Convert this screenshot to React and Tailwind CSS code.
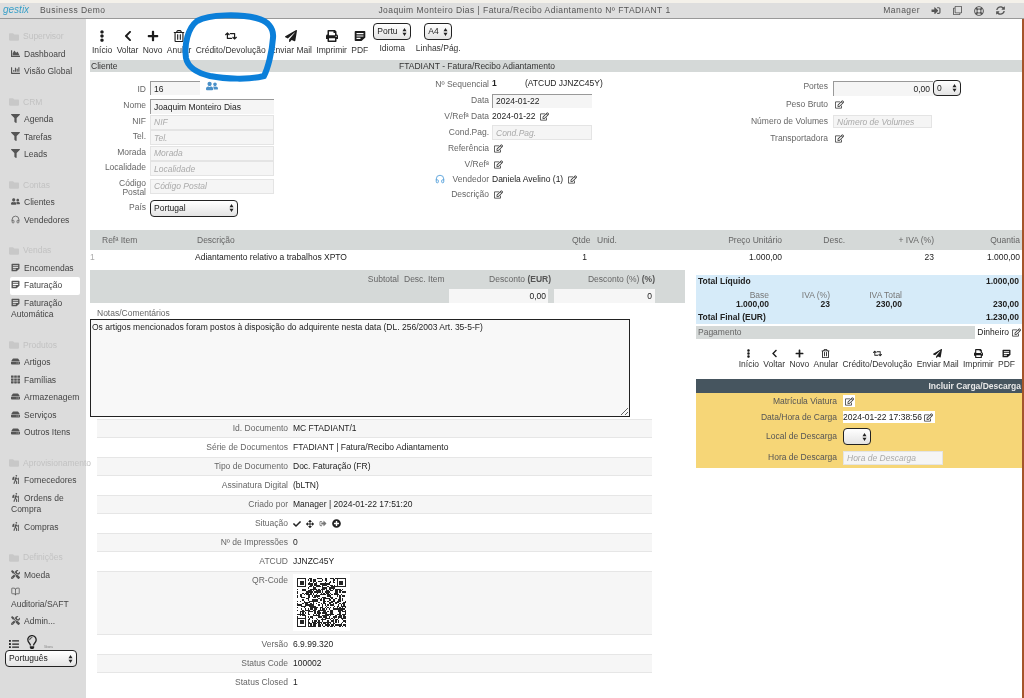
import {
  FaEllipsisV, FaChevronLeft, FaPlus, FaRegTrashAlt, FaRetweet, FaPaperPlane, FaPrint,
  FaFolder, FaChartBar, FaFilter, FaUserFriends, FaRegEdit, FaHdd, FaTh, FaHiking, FaTools,
  FaSignInAlt, FaRegClone, FaRegLifeRing, FaCheck, FaArrowsAlt, FaSignOutAlt, FaPlusCircle,
  FaList, FaRegLightbulb, FaChartArea, FaSyncAlt,
} from 'react-icons/fa'
import { BookOpen, Headphones } from 'lucide-react'

// the note glyph used for PDF and the Vendas entries: rounded sheet with a clipped corner
function NoteIcon({ className }) {
  return (
    <svg viewBox="0 0 12 12" className={className} fill="currentColor">
      <path d="M1.5 1h9a.8.8 0 0 1 .8.8V7.5L7.5 11H1.5a.8.8 0 0 1-.8-.8V1.8a.8.8 0 0 1 .8-.8zM2.5 3v1.2h7V3zm0 2.4v1.2h7V5.4zm0 2.4V9h4V7.8z" fillRule="evenodd" />
    </svg>
  )
}

const NAV = [
  { title: 'Supervisor', items: [['Dashboard', FaChartArea], ['Visão Global', FaChartBar]] },
  { title: 'CRM', items: [['Agenda', FaFilter], ['Tarefas', FaFilter], ['Leads', FaFilter]] },
  { title: 'Contas', items: [['Clientes', FaUserFriends], ['Vendedores', Headphones]] },
  { title: 'Vendas', items: [['Encomendas', NoteIcon], ['Faturação', NoteIcon, true], ['Faturação Automática', NoteIcon]] },
  { title: 'Produtos', items: [['Artigos', FaHdd], ['Famílias', FaTh], ['Armazenagem', FaHdd], ['Serviços', FaHdd], ['Outros Itens', FaHdd]] },
  { title: 'Aprovisionamento', items: [['Fornecedores', FaHiking], ['Ordens de Compra', FaHiking], ['Compras', FaHiking]] },
  { title: 'Definições', items: [['Moeda', FaTools], ['Auditoria/SAFT', BookOpen], ['Admin...', FaTools]] },
]

const TOOLS = [
  ['Início', FaEllipsisV], ['Voltar', FaChevronLeft], ['Novo', FaPlus], ['Anular', FaRegTrashAlt],
  ['Crédito/Devolução', FaRetweet], ['Enviar Mail', FaPaperPlane], ['Imprimir', FaPrint], ['PDF', NoteIcon],
]

const INFO = [
  ['Id. Documento', 'MC FTADIANT/1'],
  ['Série de Documentos', 'FTADIANT | Fatura/Recibo Adiantamento'],
  ['Tipo de Documento', 'Doc. Faturação (FR)'],
  ['Assinatura Digital', '(bLTN)'],
  ['Criado por', 'Manager | 2024-01-22 17:51:20'],
  ['Situação', 'icons'],
  ['Nº de Impressões', '0'],
  ['ATCUD', 'JJNZC45Y'],
  ['QR-Code', 'qr'],
  ['Versão', '6.9.99.320'],
  ['Status Code', '100002'],
  ['Status Closed', '1'],
]

// fake but stable QR pattern, 37 modules wide
function qrPath() {
  let seed = 1337
  let d = ''
  const finder = (x, y) => x < 7 && y < 7 && (x === 0 || y === 0 || x === 6 || y === 6 || (x > 1 && x < 5 && y > 1 && y < 5))
  for (let y = 0; y < 37; y++) {
    for (let x = 0; x < 37; x++) {
      seed = (seed * 16807) % 2147483647
      let on = seed % 100 < 52
      const inTL = x < 8 && y < 8
      const inTR = x > 28 && y < 8
      const inBL = x < 8 && y > 28
      if (inTL) on = finder(x, y)
      if (inTR) on = finder(x - 30, y)
      if (inBL) on = finder(x, y - 30)
      if (on) d += `M${x} ${y}h1v1h-1z`
    }
  }
  return d
}

function Select({ value, className }) {
  return (
    <span className={`relative block shrink-0 ${className}`}>
      <select
        defaultValue={value}
        className="block h-full w-full appearance-none rounded-[4px] border-[1.5px] border-[#222] bg-gradient-to-b from-white to-[#e4e4e4] pl-[3px] text-[8.5px] text-[#222]"
      >
        <option>{value}</option>
      </select>
      <svg viewBox="0 0 6 10" className="pointer-events-none absolute right-[4px] top-1/2 h-[8px] w-[5px] -translate-y-1/2 fill-[#222]">
        <path d="M3 0l2.5 4h-5zM3 10L.5 6h5z" />
      </svg>
    </span>
  )
}

function Input({ value, placeholder, className = '' }) {
  return (
    <input
      readOnly
      value={value}
      placeholder={placeholder}
      className={`block bg-[#f5f5f5] px-[3px] text-[8.5px] text-[#222] outline-none placeholder:italic placeholder:text-[#aaa] ${value ? 'border-t border-l border-[#999]' : 'border border-[#e4e4e4]'} ${className}`}
    />
  )
}

function Edit() {
  return (
    <span className="inline-flex h-[12px] w-[12px] shrink-0 items-center justify-center bg-white">
      <FaRegEdit className="h-[9px] w-[9px] text-[#333]" />
    </span>
  )
}

function Toolbar({ className, small }) {
  return (
    <div className={`flex items-end gap-[4.3px] ${className}`}>
      {TOOLS.map(([label, Icon]) => (
        <div key={label} className="flex flex-col items-center">
          <Icon className={small ? 'mb-[1px] h-[9px] w-[9px] text-[#1c1c1c]' : 'mb-[3px] h-[12px] w-[12px] text-[#1c1c1c]'} />
          <span className="whitespace-nowrap text-[8.5px] leading-[11px] text-[#333]">{label}</span>
        </div>
      ))}
    </div>
  )
}

function Sidebar() {
  return (
    <aside className="w-[86px] shrink-0 bg-[#dcdcdc] pt-[8.5px]">
      {NAV.map((group) => (
        <div key={group.title} className="mb-[12.5px]">
          <div className="flex h-[18px] items-center gap-[4px] whitespace-nowrap pl-[9px] text-[8.5px] text-[#c2c2c2]">
            <FaFolder className="h-[10px] w-[10px] shrink-0 text-[#c8c8c8]" />
            {group.title}
          </div>
          {group.items.map(([label, Icon, active]) => (
            <div
              key={label}
              className={`ml-[10px] mr-[6px] rounded-[2px] pl-[1px] text-[8.5px] leading-[11.5px] text-[#444] py-[3px] ${active ? 'bg-white' : ''}`}
            >
              <Icon className="mr-[4px] inline-block h-[9px] w-[9px] align-[-1px] text-[#555]" />
              {label}
            </div>
          ))}
        </div>
      ))}
      <div className="-mt-[8px] flex items-end gap-[6px] pl-[8px]">
        <FaList className="h-[10px] w-[12px] text-[#222]" />
        <FaRegLightbulb className="h-[14px] w-[12px] text-[#222]" />
        <span className="text-[3px] text-[#888]">Sbarra</span>
      </div>
      <Select value="Português" className="ml-[5px] mt-[1px] h-[17px] w-[72px]" />
    </aside>
  )
}

function FormLeft() {
  const Row = ({ label, children, className = 'h-[15.5px]', labelClass = '-translate-y-[1px]' }) => (
    <div className={`flex items-center gap-[4px] ${className}`}>
      <span className={`w-[56px] text-right text-[8.5px] leading-[9px] text-[#666] ${labelClass}`}>{label}</span>
      {children}
    </div>
  )
  return (
    <div className="w-[184px] shrink-0 pt-[8.5px]">
      <Row label="ID" className="mb-[3.5px] h-[15px]" labelClass="translate-y-[1px]">
        <Input value="16" className="h-[14px] w-[50px]" />
        <FaUserFriends className="ml-[2px] h-[10px] w-[12px] -translate-y-[2px] text-[#4a90c8]" />
      </Row>
      <Row label="Nome"><Input value="Joaquim Monteiro Dias" className="h-[15px] w-[124px]" /></Row>
      <Row label="NIF"><Input placeholder="NIF" className="h-[15px] w-[124px]" /></Row>
      <Row label="Tel."><Input placeholder="Tel." className="h-[15px] w-[124px]" /></Row>
      <Row label="Morada"><Input placeholder="Morada" className="h-[15px] w-[124px]" /></Row>
      <Row label="Localidade"><Input placeholder="Localidade" className="h-[15px] w-[124px]" /></Row>
      <Row label={<>Código<br />Postal</>} className="mb-[4px] h-[19px]" labelClass="translate-y-[2px]">
        <Input placeholder="Código Postal" className="h-[15px] w-[124px]" />
      </Row>
      <Row label="País" className="h-[17px]"><Select value="Portugal" className="h-[17px] w-[88px]" /></Row>
    </div>
  )
}

function FormMiddle() {
  const Row = ({ label, children, className = 'h-[16px]', icon }) => (
    <div className={`flex items-center gap-[3px] ${className}`}>
      <span className="relative w-[215px] text-right text-[8.5px] text-[#666]">
        {icon}
        {label}
      </span>
      {children}
    </div>
  )
  const Val = ({ children }) => <span className="text-[8.5px] text-[#222]">{children}</span>
  return (
    <div className="w-[366px] shrink-0 pt-[4.5px]">
      <Row label="Nº Sequencial">
        <span className="w-[30px] -translate-y-[1px] text-[8.5px] font-bold text-[#222]">1</span>
        <span className="-translate-y-[1px] text-[8.5px] text-[#222]">(ATCUD JJNZC45Y)</span>
      </Row>
      <Row label="Data"><Input value="2024-01-22" className="h-[14px] w-[100px]" /></Row>
      <Row label="V/Refª Data"><Val>2024-01-22</Val><Edit /></Row>
      <Row label="Cond.Pag."><Input placeholder="Cond.Pag." className="h-[15px] w-[100px]" /></Row>
      <Row label="Referência"><Edit /></Row>
      <Row label="V/Refª" className="h-[15px]"><Edit /></Row>
      <Row
        label="Vendedor"
        className="h-[15px]"
        icon={<Headphones className="absolute left-[161px] top-[1px] h-[10px] w-[10px] text-[#4a9ad8]" />}
      >
        <Val>Daniela Avelino (1)</Val><Edit />
      </Row>
      <Row label="Descrição"><Edit /></Row>
    </div>
  )
}

function FormRight() {
  const Row = ({ label, children, className = 'h-[16px]', labelClass = '' }) => (
    <div className={`flex items-center gap-[5px] ${className}`}>
      <span className={`w-[188px] text-right text-[8.5px] text-[#666] ${labelClass}`}>{label}</span>
      {children}
    </div>
  )
  return (
    <div className="flex-1 pt-[8px]">
      <Row label="Portes" labelClass="-translate-y-[2px]">
        <Input value="0,00" className="h-[15px] w-[100px] text-right" />
        <Select value="0" className="-ml-[5px] h-[16px] w-[28px]" />
      </Row>
      <Row label="Peso Bruto" className="h-[17px]"><Edit /></Row>
      <Row label="Número de Volumes" className="h-[17px]"><Input placeholder="Número de Volumes" className="h-[13px] w-[99px]" /></Row>
      <Row label="Transportadora"><Edit /></Row>
    </div>
  )
}

function LineTable() {
  const cols = 'grid grid-cols-[105px_375px_25px_45px_142px_63px_89px_86px] text-[8.5px]'
  return (
    <div>
      <div className={`${cols} h-[20px] items-center bg-[#d5d9d8] text-[#666]`}>
        <span className="pl-[12px]">Refª Item</span>
        <span className="pl-[2px]">Descrição</span>
        <span className="pl-[2px]">Qtde</span>
        <span className="pl-[2px]">Unid.</span>
        <span className="text-right">Preço Unitário</span>
        <span className="text-right">Desc.</span>
        <span className="text-right">+ IVA (%)</span>
        <span className="text-right">Quantia</span>
      </div>
      <div className={`${cols} h-[15px] items-center text-[#222]`}>
        <span className="text-[#aaa]">1</span>
        <span>Adiantamento relativo a trabalhos XPTO</span>
        <span className="pr-[8px] text-right">1</span>
        <span />
        <span className="text-right">1.000,00</span>
        <span />
        <span className="text-right">23</span>
        <span className="text-right">1.000,00</span>
      </div>
    </div>
  )
}

function Info() {
  const qr = qrPath()
  return (
    <div className="ml-[7px] mt-[2px] w-[555px]">
      {INFO.map(([label, value], i) => (
        <div
          key={label}
          className={`flex gap-[5px] text-[8.5px] ${i % 2 === 0 ? 'border-y border-[#e6e6e6] bg-[#f6f6f6]' : ''} ${value === 'qr' ? 'h-[64px] items-start' : 'h-[19px] items-center'}`}
        >
          <span className={`w-[191px] text-right text-[#666] ${value === 'qr' ? 'pt-[2px]' : ''}`}>{label}</span>
          {value === 'icons' && (
            <span className="flex items-center gap-[5px] text-[#222]">
              <FaCheck className="h-[8px] w-[8px]" />
              <FaArrowsAlt className="h-[8px] w-[8px]" />
              <FaSignOutAlt className="h-[7px] w-[8px] text-[#777]" />
              <FaPlusCircle className="h-[9px] w-[9px]" />
            </span>
          )}
          {value === 'qr' && (
            <span className="mt-[2px] block h-[57px] w-[57px] bg-white p-[4px]">
              <svg viewBox="0 0 37 37" className="h-[49px] w-[49px]" shapeRendering="crispEdges">
                <path d={qr} fill="#222" />
              </svg>
            </span>
          )}
          {value !== 'icons' && value !== 'qr' && <span className="text-[#222]">{value}</span>}
        </div>
      ))}
    </div>
  )
}

function Totals() {
  return (
    <div className="w-[326px] shrink-0 pt-[5px]">
      <div className="h-[49px] bg-[#d6ebf9] px-[2px] text-[8.5px] leading-[10px] text-[#222]">
        <div className="flex justify-between pr-[1px] pt-[1px] font-bold">
          <span>Total Líquido</span>
          <span>1.000,00</span>
        </div>
        <div className="mt-[5px] grid grid-cols-[71px_61px_72px_1fr] pr-[1px] text-right leading-[8.5px]">
          <span className="text-[#777]">Base</span>
          <span className="text-[#777]">IVA (%)</span>
          <span className="text-[#777]">IVA Total</span>
          <span />
          <span className="font-bold">1.000,00</span>
          <span className="font-bold">23</span>
          <span className="font-bold">230,00</span>
          <span className="font-bold">230,00</span>
        </div>
        <div className="mt-[4px] flex justify-between pr-[1px] font-bold">
          <span>Total Final (EUR)</span>
          <span>1.230,00</span>
        </div>
      </div>
      <div className="mt-[2px] flex h-[13px] items-center bg-[#d5d9d8] pl-[2px] text-[8.5px] text-[#666]">
        <span className="flex-1">Pagamento</span>
        <span className="flex h-full items-center gap-[1px] bg-white pl-[2px] text-[#222]">Dinheiro <Edit /></span>
      </div>
      <Toolbar small className="mt-[10px] justify-end pr-[7px]" />
      <div className="mt-[9px] h-[14px] bg-[#46555f] pr-[1px] text-right text-[8.5px] font-bold leading-[14px] text-[#e8e8e8]">
        Incluir Carga/Descarga
      </div>
      <div className="h-[75px] bg-[#f6d677] text-[8.5px] text-[#555]">
        {[
          ['Matrícula Viatura', <Edit key="e" />, 'h-[16px]'],
          ['Data/Hora de Carga', <span key="d" className="flex h-[12px] items-center gap-[1px] bg-white text-[#222]">2024-01-22 17:38:56 <Edit /></span>, 'h-[16px]'],
          ['Local de Descarga', <Select key="s" value="" className="h-[17px] w-[28px]" />, 'h-[23px]'],
          ['Hora de Descarga', <Input key="i" placeholder="Hora de Descarga" className="h-[14px] w-[100px]" />, 'h-[19px]'],
        ].map(([label, el, h]) => (
          <div key={label} className={`flex items-center gap-[6px] ${h}`}>
            <span className="w-[141px] text-right">{label}</span>
            {el}
          </div>
        ))}
      </div>
    </div>
  )
}

export default function App() {
  return (
    <div className="relative flex min-h-[698px] flex-col overflow-hidden bg-white [font-family:'Liberation_Sans',Arial,sans-serif] blur-[0.45px]">
      <div className="h-[3px] bg-[#f4f1ea]" />
      <header className="flex h-[16px] items-center border-b border-[#999] bg-[#dedede] pr-[19px] text-[8.5px] tracking-[0.45px] text-[#555]">
        <span className="ml-[3px] w-[37px] -translate-y-[1px] text-[10px] italic tracking-normal text-[#3aa0c8]">gestix</span>
        <span>Business Demo</span>
        <span className="ml-[273px]">Joaquim Monteiro Dias | Fatura/Recibo Adiantamento Nº FTADIANT 1</span>
        <span className="ml-auto">Manager</span>
        <span className="ml-[11px] flex items-center gap-[12px] text-[#555]">
          <FaSignInAlt className="h-[9px] w-[10px]" />
          <FaRegClone className="h-[9px] w-[9px]" />
          <FaRegLifeRing className="h-[10px] w-[10px]" />
          <FaSyncAlt className="h-[9px] w-[9px]" />
        </span>
      </header>
      <div className="flex flex-1">
        <Sidebar />
        <main className="min-w-0 flex-1 pl-[4px]">
          <div className="flex h-[41px] items-start pl-[2px]">
            <Toolbar className="mt-[11px]" />
            <div className="ml-[5px] mt-[4px] flex w-[38px] flex-col items-center">
              <Select value="Portu" className="h-[17px] w-[38px]" />
              <span className="mt-[3px] text-[8.5px] leading-[11px] text-[#333]">Idioma</span>
            </div>
            <div className="ml-[5px] mt-[4px] flex w-[44px] flex-col items-center">
              <Select value="A4" className="h-[17px] w-[28px]" />
              <span className="mt-[3px] whitespace-nowrap text-[8.5px] leading-[11px] text-[#333]">Linhas/Pág.</span>
            </div>
          </div>
          <div className="flex h-[12px] items-center bg-[#d5d9d8] text-[8.5px] text-[#333]">
            <span className="w-[309px] pl-[1px]">Cliente</span>
            <span>FTADIANT - Fatura/Recibo Adiantamento</span>
          </div>
          <div className="flex h-[158px]">
            <FormLeft />
            <FormMiddle />
            <FormRight />
          </div>
          <LineTable />
          <div className="mt-[5px] flex gap-[11px]">
            <div className="w-[595px] shrink-0">
              <div className="h-[33px] bg-[#d5d9d8] text-[8.5px] text-[#666]">
                <div className="flex h-[19px] items-center">
                  <span className="w-[309px] text-right">Subtotal</span>
                  <span className="ml-[5px] w-[47px]">Desc. Item</span>
                  <span className="w-[100px] text-right">Desconto <b className="text-[#555]">(EUR)</b></span>
                  <span className="w-[104px] text-right">Desconto (%) <b className="text-[#555]">(%)</b></span>
                </div>
                <div className="flex pl-[359px]">
                  <span className="h-[14px] w-[99px] bg-[#f6f6f6] pr-[2px] text-right leading-[14px] text-[#222]">0,00</span>
                  <span className="ml-[6px] h-[14px] w-[101px] bg-[#f6f6f6] pr-[3px] text-right leading-[14px] text-[#222]">0</span>
                </div>
              </div>
              <div className="mt-[5px] pl-[7px] text-[8.5px] leading-[11px] text-[#666]">Notas/Comentários</div>
              <textarea
                readOnly
                value="Os artigos mencionados foram postos à disposição do adquirente nesta data (DL. 256/2003 Art. 35-5-F)"
                className="block h-[98px] w-[540px] border border-[#222] bg-[#f8f8f8] px-[1px] pt-[2px] text-[8.5px] leading-[11px] text-[#222] outline-none"
              />
              <Info />
            </div>
            <Totals />
          </div>
        </main>
        <div className="w-[2px] shrink-0 bg-[#a4552b]" />
      </div>
      {/* blue pen annotation drawn over the toolbar */}
      <svg viewBox="0 0 1024 698" className="pointer-events-none absolute left-0 top-0 h-[698px] w-[1024px]" fill="none">
        <path
          d="M197 21C210 14 240 14 256 18C268 21 274 28 273 38C272 52 268 68 264 76C250 80 225 79 210 76C197 73 188 68 186 58C184 44 188 28 197 21Z"
          stroke="#0b7fd9"
          strokeWidth="6"
          strokeLinecap="round"
        />
      </svg>
    </div>
  )
}
